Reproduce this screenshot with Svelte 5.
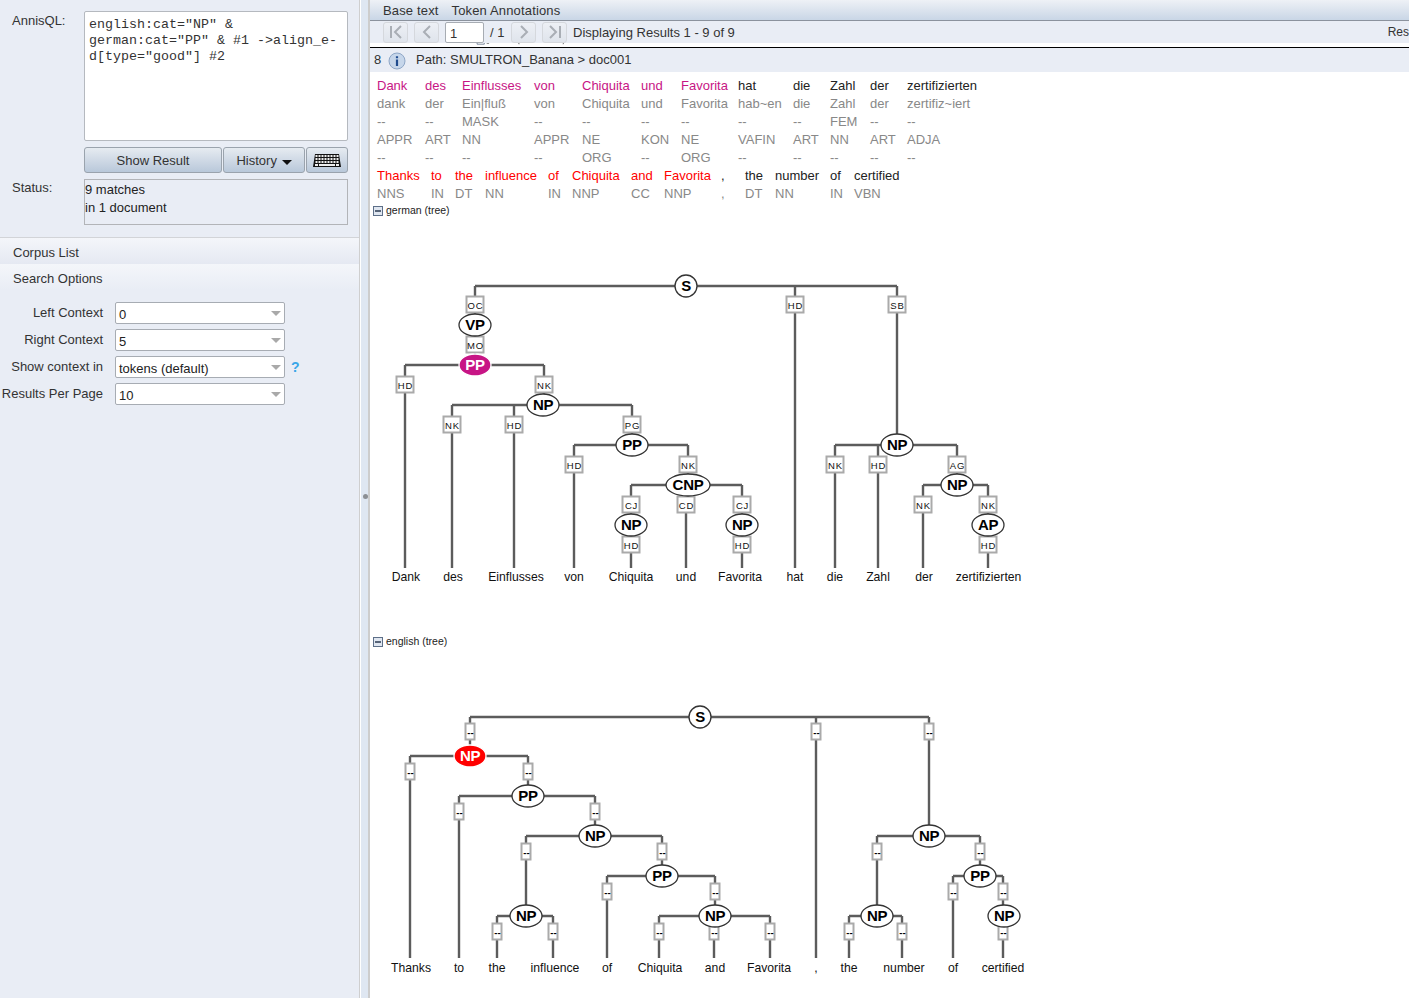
<script>
	const options = [
		{ label: 'Left Context', value: '0' },
		{ label: 'Right Context', value: '5' },
		{ label: 'Show context in', value: 'tokens (default)', help: true },
		{ label: 'Results Per Page', value: '10' }
	];

	// kwic rows: m = match colour, t = plain token, a = annotation
	const germanCols = [48, 37, 72, 48, 59, 40, 57, 55, 37, 40, 37, 80];
	const germanRows = [
		{ cls: 'de', cells: ['Dank', 'des', 'Einflusses', 'von', 'Chiquita', 'und', 'Favorita', 'hat', 'die', 'Zahl', 'der', 'zertifizierten'], matched: 7 },
		{ cells: ['dank', 'der', 'Ein|fluß', 'von', 'Chiquita', 'und', 'Favorita', 'hab~en', 'die', 'Zahl', 'der', 'zertifiz~iert'] },
		{ cells: ['--', '--', 'MASK', '--', '--', '--', '--', '--', '--', 'FEM', '--', '--'] },
		{ cells: ['APPR', 'ART', 'NN', 'APPR', 'NE', 'KON', 'NE', 'VAFIN', 'ART', 'NN', 'ART', 'ADJA'] },
		{ cells: ['--', '--', '--', '--', 'ORG', '--', 'ORG', '--', '--', '--', '--', '--'] }
	];
	const englishCols = [54, 24, 30, 63, 24, 59, 33, 57, 24, 30, 55, 24, 60];
	const englishRows = [
		{ cls: 'en', cells: ['Thanks', 'to', 'the', 'influence', 'of', 'Chiquita', 'and', 'Favorita', ',', 'the', 'number', 'of', 'certified'], matched: 8 },
		{ cells: ['NNS', 'IN', 'DT', 'NN', 'IN', 'NNP', 'CC', 'NNP', ',', 'DT', 'NN', 'IN', 'VBN'] }
	];

	// tree parts, in page coordinates: [x, y, label, fill]
	const german = {
		lines: [
			[475, 286, 897, 286], [475, 286, 475, 325], [795, 286, 795, 568], [897, 286, 897, 445],
			[475, 325, 475, 365], [405, 365, 544, 365], [405, 365, 405, 568], [544, 365, 544, 405],
			[452, 405, 632, 405], [452, 405, 452, 568], [514, 405, 514, 568], [632, 405, 632, 445],
			[574, 445, 688, 445], [574, 445, 574, 568], [688, 445, 688, 485],
			[631, 485, 742, 485], [631, 485, 631, 568], [686, 485, 686, 568], [742, 485, 742, 568],
			[835, 445, 957, 445], [835, 445, 835, 568], [878, 445, 878, 568], [957, 445, 957, 485],
			[923, 485, 988, 485], [923, 485, 923, 568], [988, 485, 988, 568]
		],
		boxW: 18,
		boxes: [
			[475, 305, 'OC'], [795, 305, 'HD'], [897, 305, 'SB'], [475, 345, 'MO'], [405, 385, 'HD'], [544, 385, 'NK'],
			[452, 425, 'NK'], [514, 425, 'HD'], [632, 425, 'PG'], [574, 465, 'HD'], [688, 465, 'NK'],
			[631, 505, 'CJ'], [686, 505, 'CD'], [742, 505, 'CJ'], [631, 545, 'HD'], [742, 545, 'HD'],
			[835, 465, 'NK'], [878, 465, 'HD'], [957, 465, 'AG'], [923, 505, 'NK'], [988, 505, 'NK'], [988, 545, 'HD']
		],
		nodes: [
			[686, 286, 'S'], [475, 325, 'VP'], [475, 365, 'PP', '#c71585'], [543, 405, 'NP'], [632, 445, 'PP'],
			[688, 485, 'CNP'], [631, 525, 'NP'], [742, 525, 'NP'], [897, 445, 'NP'], [957, 485, 'NP'], [988, 525, 'AP']
		],
		words: [
			[406, 'Dank'], [453, 'des'], [516, 'Einflusses'], [574, 'von'], [631, 'Chiquita'], [686, 'und'], [740, 'Favorita'],
			[795, 'hat'], [835, 'die'], [878, 'Zahl'], [924, 'der'], [988.5, 'zertifizierten']
		],
		wordY: 581
	};
	const english = {
		lines: [
			[470, 717, 929, 717], [470, 717, 470, 756], [816, 717, 816, 958], [929, 717, 929, 836],
			[410, 756, 528, 756], [410, 756, 410, 958], [528, 756, 528, 796],
			[459, 796, 595, 796], [459, 796, 459, 958], [595, 796, 595, 836],
			[526, 836, 662, 836], [526, 836, 526, 916], [662, 836, 662, 876],
			[607, 876, 715, 876], [607, 876, 607, 958], [715, 876, 715, 916],
			[497, 916, 553, 916], [497, 916, 497, 958], [553, 916, 553, 958],
			[659, 916, 770, 916], [659, 916, 659, 958], [714, 916, 714, 958], [770, 916, 770, 958],
			[877, 836, 980, 836], [877, 836, 877, 916], [980, 836, 980, 876],
			[849, 916, 902, 916], [849, 916, 849, 958], [902, 916, 902, 958],
			[953, 876, 1003, 876], [953, 876, 953, 958], [1003, 876, 1003, 958]
		],
		boxW: 10,
		boxes: [
			[470, 732], [816, 732], [929, 732], [410, 772], [528, 772], [459, 812], [595, 812],
			[526, 852], [662, 852], [607, 892], [715, 892], [497, 932], [553, 932], [659, 932], [714, 932], [770, 932],
			[877, 852], [980, 852], [953, 892], [1003, 892], [849, 932], [902, 932], [1003, 932]
		].map((b) => [b[0], b[1], '--']),
		nodes: [
			[700, 717, 'S'], [470, 756, 'NP', '#ff0000'], [528, 796, 'PP'], [595, 836, 'NP'], [662, 876, 'PP'],
			[526, 916, 'NP'], [715, 916, 'NP'], [929, 836, 'NP'], [980, 876, 'PP'], [877, 916, 'NP'], [1004, 916, 'NP']
		],
		words: [
			[411, 'Thanks'], [459, 'to'], [497, 'the'], [555, 'influence'], [607, 'of'], [660, 'Chiquita'], [715, 'and'],
			[769, 'Favorita'], [816, ','], [849, 'the'], [904, 'number'], [953, 'of'], [1003, 'certified']
		],
		wordY: 972
	};

	const trees = [
		{ name: 'german (tree)', data: german, top: 217, height: 417 },
		{ name: 'english (tree)', data: english, top: 648, height: 350 }
	];

	function rx(label) {
		if (label === 'S') return 11;
		return label.length === 3 ? 22 : 16;
	}

	function gridCols(cols) {
		return 'grid-template-columns:' + cols.map((c) => c + 'px').join(' ');
	}
</script>

{#snippet collapse()}
	<svg class="minus" width="10" height="10" viewBox="0 0 10 10">
		<rect x="0.5" y="0.5" width="9" height="9" fill="#dfe6f0" stroke="#5d6f88" />
		<path d="M2 5h6" stroke="#1d2b44" stroke-width="1.4" />
	</svg>
{/snippet}

{#snippet kwic(rows, cols)}
	<div class="kwic" style={gridCols(cols)}>
		{#each rows as row}
			{#each row.cells as cell, i}
				<span class={row.cls ? (i < row.matched ? row.cls : 'plain') : 'anno'}>{cell}</span>
			{/each}
		{/each}
	</div>
{/snippet}

<div class="page">
	<aside class="side">
		<div class="queryPanel">
			<div class="field">
				<span class="fieldLabel">AnnisQL:</span>
				<div class="query">english:cat="NP" &amp;
german:cat="PP" &amp; #1 -&gt;align_e-
d[type="good"] #2</div>
			</div>
			<div class="buttons">
				<button class="show">Show Result</button>
				<button class="history">History <i class="caret"></i></button>
				<button class="keys" aria-label="Keyboard">
					<svg width="28" height="13" viewBox="0 0 28 13">
						<path d="M2 0h24l2 13H0z" fill="#111" />
						{#each [1, 4, 7] as y}
							{#each Array.from({ length: 8 }) as _, k}
								<rect x={2.5 + k * 3} {y} width="2" height="2" fill="#eee" />
							{/each}
						{/each}
						<rect x="2" y="10" width="3" height="2" fill="#eee" />
						<rect x="6" y="10" width="16" height="2" fill="#eee" />
						<rect x="23" y="10" width="3" height="2" fill="#eee" />
					</svg>
				</button>
			</div>
			<div class="field status">
				<span class="fieldLabel">Status:</span>
				<div class="statusBox">9 matches<br />in 1 document</div>
			</div>
		</div>

		<div class="accordion">
			<div class="accHead">Corpus List</div>
			<div class="accHead second">Search Options</div>
			<div class="options">
				{#each options as opt}
					<div class="optRow">
						<span class="optLabel">{opt.label}</span>
						<div class="select">
							<span>{opt.value}</span>
							<i class="arrow"></i>
						</div>
						{#if opt.help}<span class="help">?</span>{/if}
					</div>
				{/each}
			</div>
		</div>
	</aside>

	<div class="splitter"><i class="grip"></i></div>

	<main class="main">
		<div class="tabs">
			<span>Base text</span>
			<span>Token Annotations</span>
		</div>
		<div class="pager">
			<button class="pageBtn" aria-label="First page">
				<svg width="16" height="14" viewBox="0 0 16 14"><path d="M3 1v12M13 1 7 7l6 6" fill="none" stroke="#a9aeb5" stroke-width="2" /></svg>
			</button>
			<button class="pageBtn" aria-label="Previous page">
				<svg width="16" height="14" viewBox="0 0 16 14"><path d="M11 1 5 7l6 6" fill="none" stroke="#a9aeb5" stroke-width="2" /></svg>
			</button>
			<div class="pageInput">1</div>
			<span class="pageOf">/ 1</span>
			<button class="pageBtn" aria-label="Next page">
				<svg width="16" height="14" viewBox="0 0 16 14"><path d="m5 1 6 6-6 6" fill="none" stroke="#a9aeb5" stroke-width="2" /></svg>
			</button>
			<button class="pageBtn" aria-label="Last page">
				<svg width="16" height="14" viewBox="0 0 16 14"><path d="m3 1 6 6-6 6M13 1v12" fill="none" stroke="#a9aeb5" stroke-width="2" /></svg>
			</button>
			<span class="pageInfo">Displaying Results 1 - 9 of 9</span>
			<span class="cut">Res</span>
		</div>
		<!-- bottom edge of the previous, scrolled away result -->
		<svg class="scrolled" width="1039" height="5" viewBox="0 0 1039 5">
			<path d="M4 0v1.5h9V0" fill="none" stroke="#5d6f88" />
			<path d="M16 0.5h3M56 0v1h1M112 0v1h-1" fill="none" stroke="#666" />
		</svg>
		<div class="pathRow">
			<span class="num">8</span>
			<svg class="info" width="18" height="18" viewBox="0 0 18 18">
				<circle cx="9" cy="9" r="8" fill="#c6d6ea" stroke="#8ea6c6" />
				<path d="M9 4.2v2M9 7.6V14" stroke="#1f4b8e" stroke-width="2.2" />
			</svg>
			<span>Path: SMULTRON_Banana &gt; doc001</span>
		</div>

		<div class="tokens">
			{@render kwic(germanRows, germanCols)}
			{@render kwic(englishRows, englishCols)}
		</div>

		{#each trees as tree}
			<div class="treeHead">{@render collapse()}<span>{tree.name}</span></div>
			<svg class="tree" width="1039" height={tree.height} viewBox="370 {tree.top} 1039 {tree.height}">
				{#each tree.data.lines as l}
					<line x1={l[0]} y1={l[1]} x2={l[2]} y2={l[3]} stroke="#5c5c5c" stroke-width="2.4" />
				{/each}
				{#each tree.data.boxes as b}
					<rect
						x={b[0] - tree.data.boxW / 2 + 0.5}
						y={b[1] - 8.5}
						width={tree.data.boxW - 1}
						height="16"
						fill="#fff"
						stroke="#aaa"
						stroke-width="2"
					/>
					<text class="boxText" class:dash={b[2] === '--'} x={b[0] + 0.5} y={b[1] + 3.5} text-anchor="middle">{b[2]}</text>
				{/each}
				{#each tree.data.nodes as n}
					<ellipse
						cx={n[0]}
						cy={n[1]}
						rx={rx(n[2])}
						ry="11"
						fill={n[3] ?? '#fff'}
						stroke={n[3] ? '#fff' : '#333'}
						stroke-width="1.3"
					/>
					<text class="nodeText" x={n[0]} y={n[1] + 5} text-anchor="middle" fill={n[3] ? '#fff' : '#000'}>{n[2]}</text>
				{/each}
				{#each tree.data.words as w}
					<text class="wordText" x={w[0]} y={tree.data.wordY} text-anchor="middle">{w[1]}</text>
				{/each}
			</svg>
		{/each}
	</main>
</div>

<style>
	:global(body) {
		margin: 0;
		overflow: hidden;
		background: #fff;
	}

	.page {
		display: flex;
		height: 998px;
		overflow: hidden;
		font-family: 'Liberation Sans', Arial, sans-serif;
		font-size: 13px;
		color: #222;
	}

	.side {
		width: 360px;
		flex: none;
		box-sizing: border-box;
		background: #e9edf5;
		border-right: 1px solid #cfcfcf;
	}

	.queryPanel {
		height: 237px;
		box-sizing: border-box;
		padding: 11px 11px 0 12px;
	}

	.field {
		display: flex;
	}

	.fieldLabel {
		width: 72px;
		flex: none;
		padding-top: 2px;
		line-height: 15px;
		color: #333;
	}

	.query {
		width: 264px;
		height: 130px;
		box-sizing: border-box;
		padding: 5px 4px;
		background: #fff;
		border: 1px solid #b5b9bf;
		border-radius: 2px;
		font-family: 'Liberation Mono', monospace;
		font-size: 13.33px;
		line-height: 16px;
		white-space: pre;
		color: #333;
	}

	.buttons {
		display: flex;
		gap: 1px;
		margin: 6px 0 0 72px;
	}

	button {
		font: inherit;
		padding: 0;
		color: #333;
		border: 1px solid #9aa3ad;
		border-radius: 3px;
		background: linear-gradient(#e6ebf1, #b9c8da);
		height: 26px;
	}

	.show {
		width: 138px;
	}

	.history {
		width: 82px;
	}

	.keys {
		width: 42px;
		display: flex;
		align-items: center;
		justify-content: center;
	}

	.caret {
		display: inline-block;
		width: 0;
		height: 0;
		margin-left: 1px;
		vertical-align: 0;
		border: 5px solid transparent;
		border-top: 5px solid #111;
		border-bottom: 0;
	}

	.status {
		margin-top: 6px;
	}

	.status .fieldLabel {
		padding-top: 1px;
	}

	.statusBox {
		width: 264px;
		height: 46px;
		box-sizing: border-box;
		padding: 1px 0;
		border: 1px solid #b2b4b8;
		line-height: 18px;
	}

	.accordion {
		border-top: 1px solid #d2d4d8;
	}

	.accHead {
		height: 26px;
		box-sizing: border-box;
		padding-left: 13px;
		line-height: 30px;
		background: linear-gradient(#f4f6fa, #e5e9f2);
		color: #333;
	}

	.accHead.second {
		background: linear-gradient(#f4f6fa, #e9edf5);
	}

	.options {
		display: flex;
		flex-direction: column;
		gap: 5px;
		padding-top: 12px;
	}

	.optRow {
		display: flex;
		align-items: center;
		height: 22px;
	}

	.optLabel {
		width: 103px;
		flex: none;
		text-align: right;
		white-space: nowrap;
		color: #333;
		margin-top: -1px;
	}

	.select {
		position: relative;
		width: 170px;
		height: 22px;
		margin-left: 12px;
		box-sizing: border-box;
		padding-left: 3px;
		line-height: 23px;
		background: #fff;
		border: 1px solid #a7acb3;
		border-radius: 2px;
		color: #222;
	}

	.arrow {
		position: absolute;
		right: 3px;
		top: 8px;
		width: 0;
		height: 0;
		border: 5px solid transparent;
		border-top: 5px solid #a9a9a9;
		border-bottom: 0;
	}

	.help {
		margin-left: 6px;
		font-weight: bold;
		font-size: 14px;
		color: #3aa6e8;
	}

	.splitter {
		position: relative;
		width: 10px;
		flex: none;
		box-sizing: border-box;
		background: #dfe7f2;
		border-left: 1px solid #fff;
		border-right: 2px solid #cdcdcd;
	}

	.grip {
		position: absolute;
		left: 1.5px;
		top: 494px;
		width: 5px;
		height: 5px;
		border-radius: 50%;
		background: #8c8f94;
	}

	.main {
		flex: 1;
		min-width: 0;
		overflow: hidden;
	}

	.tabs {
		display: flex;
		gap: 13px;
		height: 21px;
		box-sizing: border-box;
		padding-left: 13px;
		line-height: 21px;
		letter-spacing: 0.15px;
		background: linear-gradient(#eef1f6, #c9d6e6);
		border-bottom: 1px solid #8b929d;
		color: #333;
	}

	.pager {
		display: flex;
		align-items: center;
		height: 22px;
		padding-left: 13px;
		background: #e9edf5;
		white-space: nowrap;
		color: #333;
	}

	.pageBtn {
		display: flex;
		align-items: center;
		justify-content: center;
		width: 25px;
		height: 21px;
		margin-right: 6px;
		border-color: #d5d8dd;
		background: linear-gradient(#edf0f5, #dfe4ec);
	}

	.pageInput {
		width: 39px;
		height: 21px;
		box-sizing: border-box;
		padding-left: 4px;
		line-height: 21px;
		background: #fff;
		border: 1px solid #a7acb3;
		border-radius: 2px;
	}

	.pageOf {
		width: 21px;
		margin-left: 6px;
	}

	.cut {
		margin-left: auto;
		font-size: 12px;
	}

	.scrolled {
		display: block;
		background: #fff;
		border-bottom: 1px solid #000;
		height: 4px;
	}

	.pathRow {
		display: flex;
		align-items: center;
		height: 24px;
		box-sizing: border-box;
		padding: 0 0 2px 4px;
		background: #e9edf5;
		color: #333;
	}

	.num {
		width: 14px;
	}

	.info {
		margin-right: 10px;
		margin-top: 4px;
	}

	.tokens {
		padding: 5px 0 0 7px;
	}

	.kwic {
		display: grid;
		grid-auto-rows: 18px;
		line-height: 18px;
		white-space: nowrap;
	}

	.de {
		color: #c71585;
	}

	.en {
		color: #f00;
	}

	.plain {
		color: #222;
	}

	.anno {
		color: #888;
	}

	.treeHead {
		display: flex;
		align-items: center;
		gap: 3px;
		height: 14px;
		padding-left: 3px;
		font-size: 10.5px;
		color: #222;
	}

	.minus {
		margin-top: 2px;
	}

	.tree {
		display: block;
	}

	.boxText {
		font-size: 9.5px;
		letter-spacing: 0.8px;
		fill: #111;
	}

	.boxText.dash {
		font-weight: bold;
		letter-spacing: 0;
		fill: #000;
	}

	.nodeText {
		font-size: 15px;
		font-weight: bold;
		letter-spacing: -0.3px;
	}

	.wordText {
		font-size: 12.2px;
		fill: #111;
	}
</style>
